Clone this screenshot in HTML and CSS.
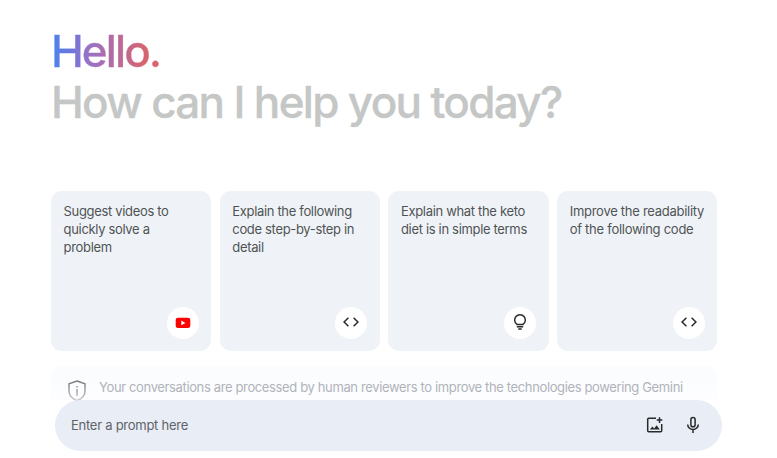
FILE: index.html
```html
<!DOCTYPE html>
<html lang="en">
<head>
<meta charset="utf-8">
<title>Gemini</title>
<link rel="stylesheet" href="styles.css">
</head>
<body>
<main class="page">
  <h1 class="greeting"><span class="hello">Hello.</span><span class="question">How can I help you today?</span></h1>
  <div class="cards">
    <button class="card"><span class="label">Suggest videos to<br>quickly solve a<br>problem</span>
      <span class="badge"><svg class="video" width="16" height="12" viewBox="0 0 16 12"><rect x=".7" y=".7" width="14.6" height="10.4" rx="2.3" fill="#f00"/><path d="M6.3 3.6 10.4 5.9 6.3 8.2Z" fill="#fff"/></svg></span></button>
    <button class="card"><span class="label">Explain the following<br>code step-by-step in<br>detail</span>
      <span class="badge"><svg class="code" width="18" height="18" viewBox="0 0 18 18"><path d="M6.4 4.8 2.1 9l4.3 4.2M11.6 4.8 15.9 9l-4.3 4.2"/></svg></span></button>
    <button class="card"><span class="label">Explain what the keto<br>diet is in simple terms</span>
      <span class="badge"><svg class="bulb" width="18" height="18" viewBox="0 0 18 18"><path d="M6.1 11.5a5.35 5.35 0 1 1 5.8 0ZM5.8 13.8h6.4M7.3 16.1h3.4"/></svg></span></button>
    <button class="card wide"><span class="label">Improve the readability<br>of the following code</span>
      <span class="badge"><svg class="code" width="18" height="18" viewBox="0 0 18 18"><path d="M6.4 4.8 2.1 9l4.3 4.2M11.6 4.8 15.9 9l-4.3 4.2"/></svg></span></button>
  </div>
  <div class="notice">
    <svg class="shield" width="18" height="22" viewBox="0 0 18 22"><defs><linearGradient id="fade" gradientUnits="userSpaceOnUse" x1="0" y1="0" x2="0" y2="20"><stop offset="0" stop-color="#76787b"/><stop offset="1" stop-color="#c8cace"/></linearGradient></defs><path d="M9 1 17 3.800v6.700c0 5-3.400 8.600-8 10-4.600-1.400-8-5-8-10V3.800Z"/><path d="M9 9v7M9 6v1.600"/></svg>
    <span>Your conversations are processed by human reviewers to improve the technologies powering Gemini</span>
  </div>
  <div class="prompt">
    <span class="placeholder">Enter a prompt here</span>
    <svg class="tool image" width="18" height="18" viewBox="0 0 18 18"><path d="M10 2.300H2.700q-1 0-1 1v11.500q0 1 1 1h12q1 0 1-1V8M13.500 1.300v5.600M10.700 4.100h5.600"/><path class="fill" d="M3.900 13.500 6.300 10.400 8.200 12.400 10.600 9.300 13.800 13.500Z"/></svg>
    <svg class="tool" width="18" height="18" viewBox="0 0 18 18"><rect x="6.900" y="1.600" width="4.200" height="9.200" rx="2.100"/><path d="M3.700 8.500a5.300 5 0 0 0 10.600 0M9 13.500v3.500"/></svg>
  </div>
</main>
</body>
</html>
```
FILE: styles.css
```css
* { box-sizing: border-box; }
body { margin: 0; background: #fff; font-family: Inter, "Liberation Sans", sans-serif; overflow: hidden; }
.page { height: 458px; padding: 26px 55px 0 51px; display: flex; flex-direction: column; }
.greeting { margin: 0; height: 165px; display: flex; flex-direction: column; align-items: flex-start; font-size: 44px; line-height: 51px; font-weight: 500; white-space: nowrap; -webkit-text-stroke: .3px; }
.hello { letter-spacing: -1.9px; color: transparent; background: linear-gradient(90deg, #4b84ee 0%, #6d76dc 18%, #9972c6 35%, #b76b9d 60%, #d56570 85%, #da646b 100%); background-clip: text; -webkit-background-clip: text; }
.question { letter-spacing: -1.67px; color: #c4c7c5; }
.cards { width: 666.4px; height: 160px; display: grid; grid-template-columns: repeat(4, 1fr); gap: 8.4px; }
.card { border: 0; border-radius: 11px; background: #eff3f8; padding: 11px 12.6px 12px 12.6px; display: flex; flex-direction: column; justify-content: space-between; align-items: flex-start; text-align: left; font: 400 13px/18px Inter, sans-serif; color: #505354; white-space: nowrap; letter-spacing: -.33px; }
.wide { letter-spacing: -.27px; }
.badge { align-self: flex-end; width: 32px; height: 32px; border-radius: 50%; background: #fff; display: grid; place-items: center; }
.badge .code, .badge .bulb { margin-top: -2px; }
svg { fill: none; stroke: #28292a; stroke-width: 1.5; }
.video { stroke: none; }
.notice { margin-top: 15px; width: 666px; height: 34px; flex: none; border-radius: 11px 11px 0 0; background: linear-gradient(#fafcfe, #fdfdff); padding: 14px 0 0 17px; display: flex; gap: 13px; font-size: 13px; line-height: 16px; color: #b0b3ba; white-space: nowrap; letter-spacing: -.365px; }
.shield { flex: none; stroke: url(#fade); }
.notice span { margin-top: -1px; }
.prompt { position: relative; flex: none; margin-left: 4px; width: 667px; height: 51px; border-radius: 26px; background: #e8edf6; padding: 0 20px 2px 16px; display: flex; align-items: center; font-size: 13px; color: #606368; letter-spacing: -.26px; }
.placeholder { flex: 1; }
.image { margin-right: 20px; }
.fill { fill: #28292a; stroke: none; }
```
